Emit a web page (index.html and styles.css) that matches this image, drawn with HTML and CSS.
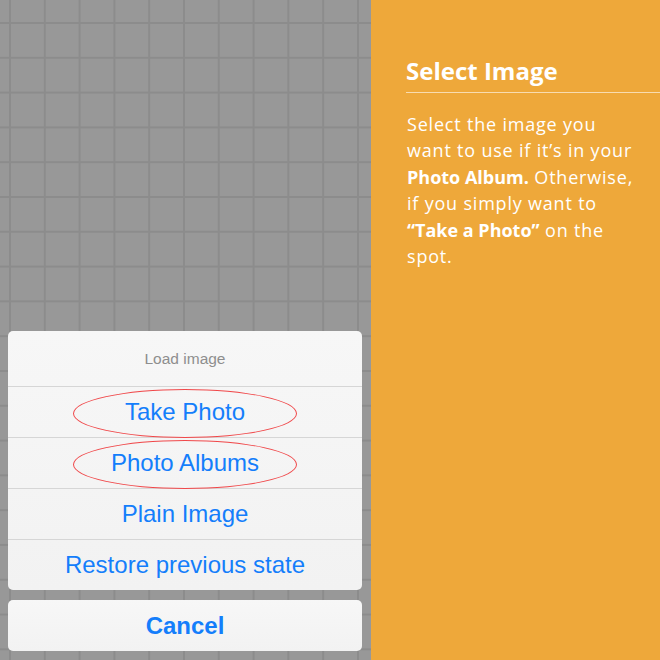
FILE: index.html
```html
<!DOCTYPE html>
<html lang="en">
<head>
  <meta charset="UTF-8">
  <title>Select Image</title>
  <link rel="stylesheet" href="styles.css">
</head>
<body>
  <div class="screen">
    <div class="canvas">
      <div class="sheet">
        <div class="sheet-title">Load image</div>
        <div class="sheet-item marked">Take Photo</div>
        <div class="sheet-item marked">Photo Albums</div>
        <div class="sheet-item">Plain Image</div>
        <div class="sheet-item">Restore previous state</div>
      </div>
      <div class="sheet cancel">Cancel</div>
    </div>
    <div class="panel">
      <h1>Select Image</h1>
      <p>Select the image you<br>want to use if it’s in your<br><b>Photo Album.</b> Otherwise,<br>if you simply want to<br><b>“Take a Photo”</b> on the<br>spot.</p>
    </div>
  </div>
</body>
</html>
```
FILE: styles.css
```css
body {
  margin: 0;
  font-family: "Liberation Sans", Arial, sans-serif;
}
.screen {
  display: flex;
  width: 660px;
  height: 660px;
}
.canvas {
  width: 354px;
  padding: 0 9px 9px 8px;
  display: flex;
  flex-direction: column;
  justify-content: flex-end;
  gap: 10px;
  background-color: #989898;
  background-image:
    linear-gradient(to right, #8c8c8c 2px, transparent 2px),
    linear-gradient(to bottom, #8c8c8c 2px, transparent 2px);
  background-size: 34.8px 34.8px;
  background-position: 9px 22px;
}
.sheet {
  background: linear-gradient(#f7f7f7, #f2f2f2);
  border-radius: 5px;
  overflow: hidden;
}
.sheet-title {
  height: 55px;
  line-height: 55px;
  text-align: center;
  font-size: 15.5px;
  color: #8e8e8e;
  border-bottom: 1px solid #d6d6d6;
}
.sheet-item {
  position: relative;
  height: 50px;
  line-height: 50px;
  text-align: center;
  font-size: 24px;
  color: #147efb;
  border-bottom: 1px solid #d6d6d6;
}
.sheet-item:last-child {
  border-bottom: none;
}
.sheet-item.marked::after {
  content: "";
  position: absolute;
  left: 65px;
  top: 2px;
  width: 222px;
  height: 47px;
  border: 1px solid #f0494b;
  border-radius: 50%;
}
.cancel {
  height: 51px;
  line-height: 51px;
  text-align: center;
  font-size: 24px;
  font-weight: bold;
  color: #147efb;
}
.panel {
  flex: 1;
  background: #eea83a;
  color: #fff;
  padding-top: 55px;
  font-family: "Open Sans", "Liberation Sans", sans-serif;
}
.panel h1 {
  margin: 0 0 0 35px;
  padding-bottom: 6px;
  font-size: 24px;
  line-height: 31px;
  border-bottom: 1px solid rgba(255, 255, 255, 0.6);
}
.panel p {
  margin: 18px 0 0 36px;
  font-size: 18px;
  line-height: 26.4px;
  letter-spacing: 0.8px;
}
.panel b {
  font-weight: bold;
  letter-spacing: 0;
}
```
